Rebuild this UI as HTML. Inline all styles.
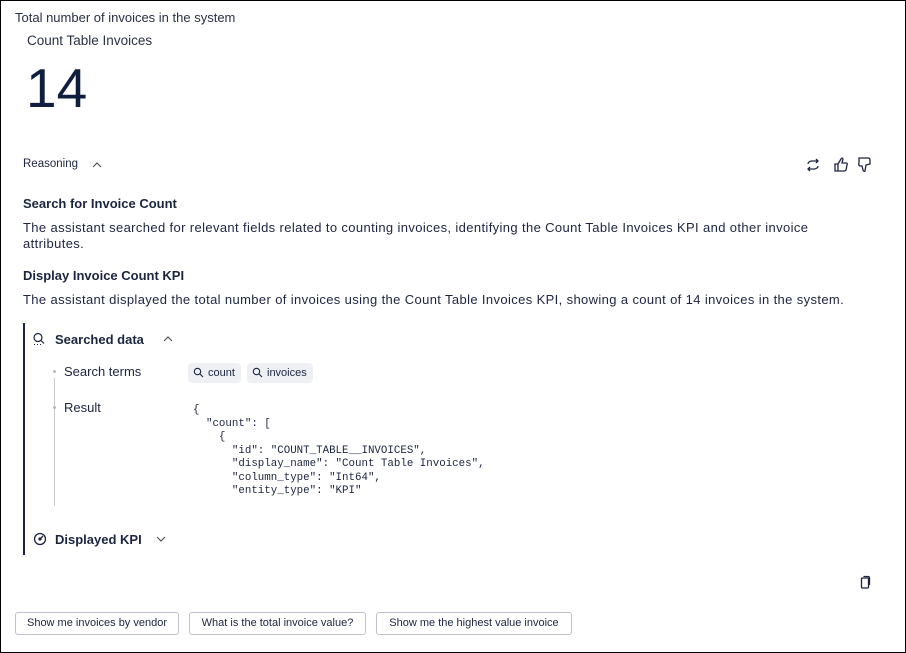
<!DOCTYPE html>
<html><head><style>
*{margin:0;padding:0;box-sizing:border-box}
body{width:906px;height:653px;overflow:hidden;background:#fff;font-family:"Liberation Sans",sans-serif;color:#1c2540;position:relative}
.frame{position:absolute;left:0;top:0;width:906px;height:653px;border:1px solid #000}
.a{position:absolute;white-space:nowrap}
.p{letter-spacing:0.37px}
.code{font-family:"Liberation Mono",monospace;font-size:10.8px;line-height:13.5px;white-space:pre;color:#1c2540}
.chip{position:absolute;top:363px;height:20px;background:#eef0f4;border-radius:4px;font-size:11px;line-height:20px;padding-left:20px}
.btn{position:absolute;top:612px;height:23px;border:1px solid #bfc3cc;border-radius:3px;font-size:11px;line-height:21px;text-align:center;color:#1c2540}
</style></head><body>
<div class="frame"></div>
<div class="a" style="left:15px;top:10px;font-size:13px;color:#2a3145">Total number of invoices in the system</div>
<div class="a" style="left:27px;top:33px;font-size:13.5px;color:#2a3145">Count Table Invoices</div>
<div class="a" style="left:26px;top:57px;font-size:55px;color:#0f1e3d;line-height:62px">14</div>
<div class="a" style="left:23px;top:158px;font-size:11.5px">Reasoning</div>
<svg class="a" style="left:91px;top:160px" width="12" height="10"><path d="M2 7 L6 3 L10 7" fill="none" stroke="#555" stroke-width="1.2"/></svg>
<svg class="a" style="left:805px;top:157px" width="16" height="16" fill="none" stroke="#1c2540" stroke-width="1.3"><path d="M3 7 A4 3 0 0 1 7 4 H13 M11 2 L13 4 L11 6 M13 9 A4 3 0 0 1 9 12 H3 M5 10 L3 12 L5 14"/></svg>
<svg class="a" style="left:833px;top:156px" width="16" height="17" fill="none" stroke="#1c2540" stroke-width="1.3"><path d="M2 8 H5 V15 H2 Z M5 8 L8 3 Q9 1 10 3 L9 7 H13 Q15 7 14 9 L13 14 Q12.5 15 11 15 H5"/></svg>
<svg class="a" style="left:857px;top:156px" width="16" height="17" fill="none" stroke="#1c2540" stroke-width="1.3"><path d="M2 2 H11 Q13 2 13 4 V8 L9 9 L8 15 Q7 16 6 14 L5 10 H3 Q1 9 2 7 Z"/></svg>
<div class="a p" style="left:23px;top:196px;font-size:13px;font-weight:bold;letter-spacing:0">Search for Invoice Count</div>
<div class="a p" style="left:23px;top:220px;font-size:13px;line-height:16px;white-space:normal;width:800px">The assistant searched for relevant fields related to counting invoices, identifying the Count Table Invoices KPI and other invoice attributes.</div>
<div class="a p" style="left:23px;top:268px;font-size:13px;font-weight:bold;letter-spacing:0">Display Invoice Count KPI</div>
<div class="a p" style="left:23px;top:292px;font-size:13px">The assistant displayed the total number of invoices using the Count Table Invoices KPI, showing a count of 14 invoices in the system.</div>
<div class="a" style="left:23px;top:323px;width:1.5px;height:232px;background:#1c2540"></div>
<svg class="a" style="left:32px;top:332px" width="14" height="14" fill="none" stroke="#1c2540" stroke-width="1.2"><circle cx="6" cy="5.5" r="4"/><path d="M9 8.5 L12 11.5"/><path d="M2 12.5h1M5 12.5h1M8 12.5h1" stroke-width="1"/></svg>
<div class="a" style="left:55px;top:332px;font-size:13px;font-weight:bold">Searched data</div>
<svg class="a" style="left:162px;top:334px" width="12" height="10"><path d="M2 7 L6 3 L10 7" fill="none" stroke="#555" stroke-width="1.2"/></svg>
<div class="a" style="left:54px;top:378px;width:1px;height:128px;background:#c8cbd2"></div>
<div class="a" style="left:53px;top:370px;width:3px;height:3px;border-radius:50%;background:#bbb"></div>
<div class="a" style="left:53px;top:406px;width:3px;height:3px;border-radius:50%;background:#bbb"></div>
<div class="a" style="left:64px;top:364px;font-size:13px">Search terms</div>
<div class="a" style="left:64px;top:400px;font-size:13px">Result</div>
<div class="chip" style="left:188px;width:53px">count</div>
<div class="chip" style="left:247px;width:66px">invoices</div>
<svg class="a" style="left:193px;top:367px" width="11" height="11" fill="none" stroke="#1c2540" stroke-width="1.1"><circle cx="4.5" cy="4.5" r="3.2"/><path d="M7 7 L10 10"/></svg>
<svg class="a" style="left:252px;top:367px" width="11" height="11" fill="none" stroke="#1c2540" stroke-width="1.1"><circle cx="4.5" cy="4.5" r="3.2"/><path d="M7 7 L10 10"/></svg>
<div class="a code" style="left:193px;top:404px">{
  "count": [
    {
      "id": "COUNT_TABLE__INVOICES",
      "display_name": "Count Table Invoices",
      "column_type": "Int64",
      "entity_type": "KPI"</div>
<svg class="a" style="left:33px;top:532px" width="14" height="14" fill="none" stroke="#1c2540" stroke-width="1.3"><circle cx="7" cy="7" r="5.5"/><path d="M7 7 L10 4"/><circle cx="7" cy="7" r="1" fill="#1c2540"/></svg>
<div class="a" style="left:55px;top:532px;font-size:13px;font-weight:bold">Displayed KPI</div>
<svg class="a" style="left:155px;top:534px" width="12" height="10"><path d="M2 3 L6 7 L10 3" fill="none" stroke="#555" stroke-width="1.2"/></svg>
<svg class="a" style="left:859px;top:575px" width="12" height="15" fill="none" stroke="#1c2540" stroke-width="1.3"><rect x="2.5" y="3" width="7" height="10" rx="1"/><path d="M4.5 1.5 H9 Q10.5 1.5 10.5 3 V10"/></svg>
<div class="btn" style="left:15px;width:164px">Show me invoices by vendor</div>
<div class="btn" style="left:189px;width:177px">What is the total invoice value?</div>
<div class="btn" style="left:376px;width:196px">Show me the highest value invoice</div>
</body></html>
